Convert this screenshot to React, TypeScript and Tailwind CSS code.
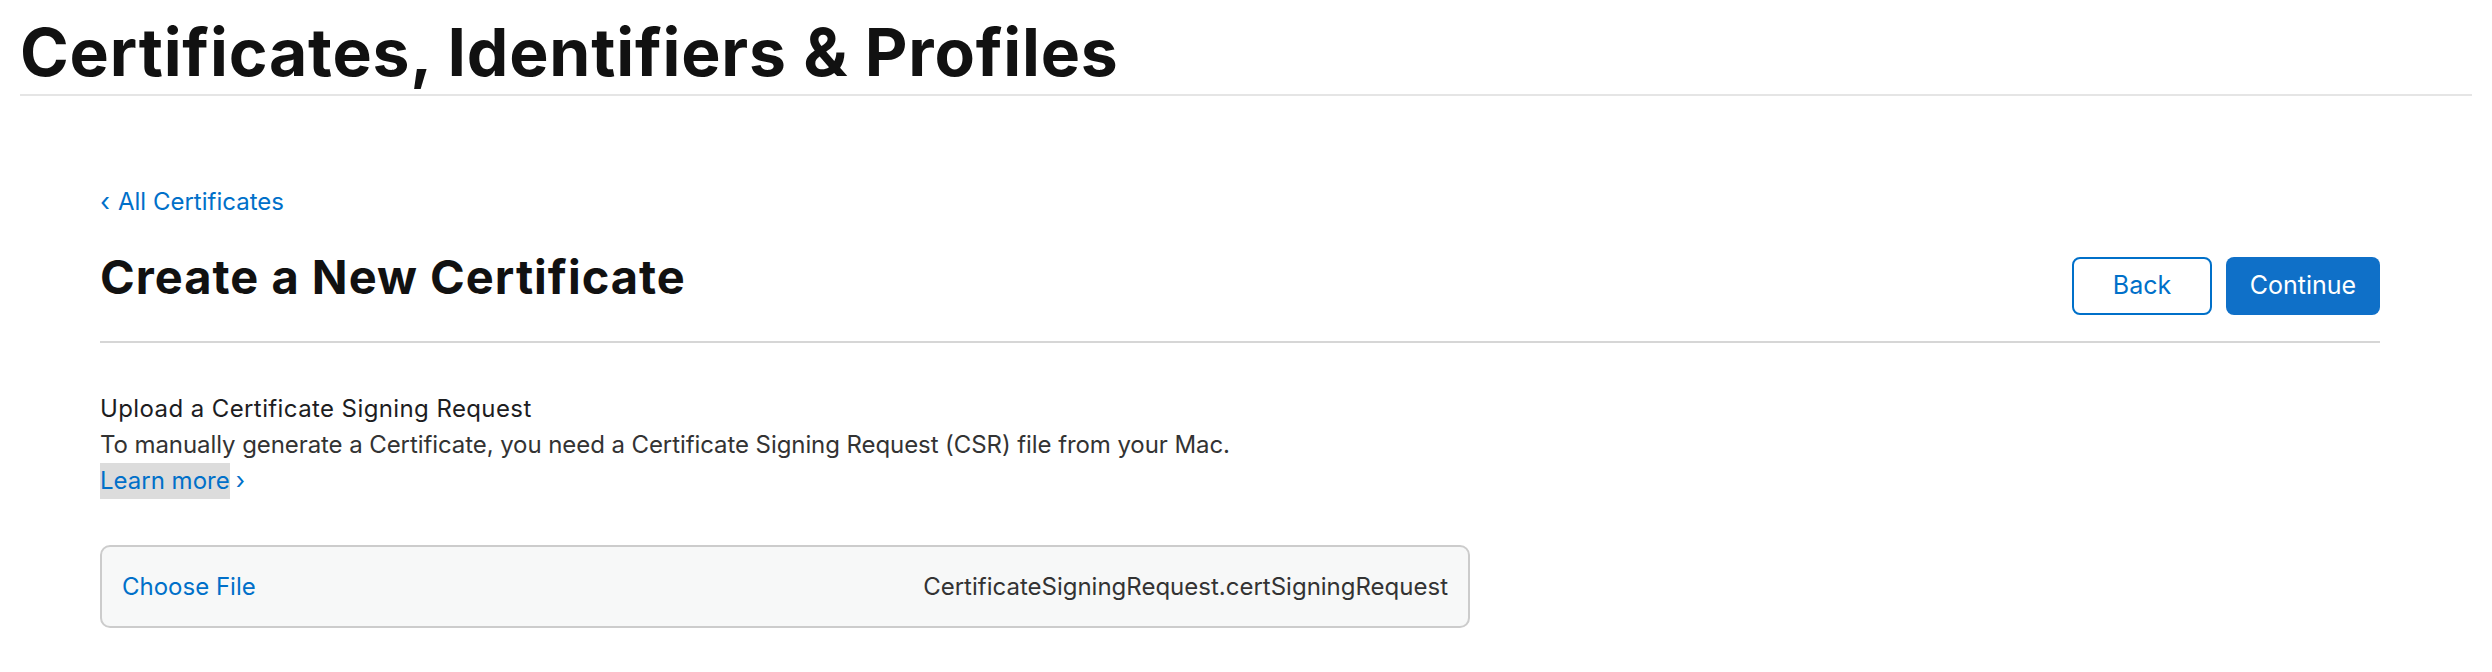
import React from 'react'

const font = { fontFamily: 'Inter, "Liberation Sans", sans-serif' }

export default function App() {
	return (
		<div className="w-[2492px] h-[672px] bg-white text-[#111111]" style={font}>
			{/* page header */}
			<header className="px-[20px] pt-[14px]">
				<h1 className="text-[66px] leading-[76px] font-bold tracking-[0.8px] text-[#111111] border-b-2 border-[#e5e5e5] pb-[4px]">
					Certificates, Identifiers &amp; Profiles
				</h1>
			</header>

			<main className="px-[100px] pt-[88px] w-[2480px]">
				<a className="flex items-center gap-[8px] text-[24px] leading-[36px] text-[#0070c9]">
					<span className="text-[26px]">‹</span>
					<span>All Certificates</span>
				</a>

				<div className="flex items-start justify-between mt-[29px] pb-[26px] border-b-2 border-[#d6d6d6]">
					<h2 className="text-[47px] leading-[56px] font-bold tracking-[1px] text-[#111111]">
						Create a New Certificate
					</h2>
					<div className="flex gap-[14px] mt-[8px]">
						<button className="w-[140px] h-[58px] rounded-[8px] border-2 border-[#0070c9] text-[#0070c9] text-[25px] bg-white">
							Back
						</button>
						<button className="w-[154px] h-[58px] rounded-[8px] bg-[#0f70c8] text-white text-[25px]">
							Continue
						</button>
					</div>
				</div>

				<section className="mt-[48px] text-[24px] leading-[36px] text-[#333333]">
					<p className="text-[#1d1d1f] tracking-[0.4px]">Upload a Certificate Signing Request</p>
					<p className="tracking-[-0.08px]">To manually generate a Certificate, you need a Certificate Signing Request (CSR) file from your Mac.</p>
					<p className="flex items-center gap-[6px]">
						<span className="bg-[#dcdcdc] text-[#0070c9]">Learn more</span>
						<span className="text-[#0070c9]">›</span>
					</p>
				</section>

				<div className="mt-[46px] w-[1370px] h-[83px] rounded-[10px] border-2 border-[#cccccc] bg-[#f7f8f8] flex items-center justify-between px-[20px] text-[24px]">
					<span className="text-[#0070c9]">Choose File</span>
					<span className="text-[#333333]">CertificateSigningRequest.certSigningRequest</span>
				</div>
			</main>
		</div>
	)
}
